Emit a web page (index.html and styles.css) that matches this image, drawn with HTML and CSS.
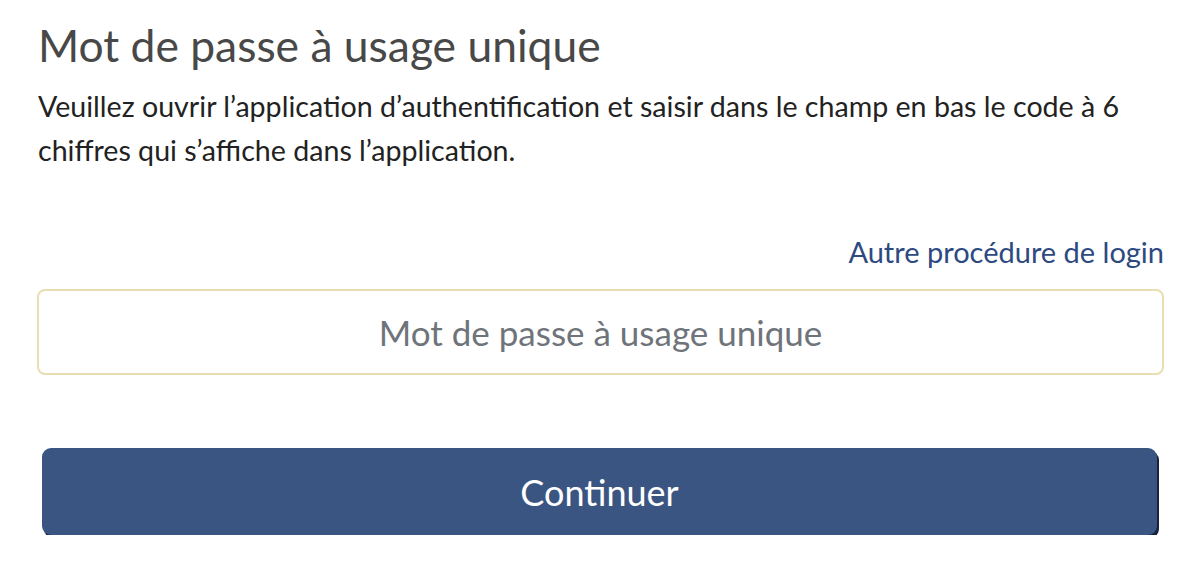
FILE: index.html
```html
<!DOCTYPE html>
<html lang="fr">
<head>
<meta charset="utf-8">
<link rel="stylesheet" href="styles.css">
</head>
<body>
<main class="page">
  <h1 class="title">Mot de passe à usage unique</h1>
  <p class="intro">Veuillez ouvrir l’application d’authentification et saisir dans le champ en bas le code à 6 chiffres qui s’affiche dans l’application.</p>
  <div class="links"><a class="alt" href="#">Autre procédure de login</a></div>
  <input class="otp" type="text" placeholder="Mot de passe à usage unique">
  <div class="actions"><button class="btn" type="button">Continuer</button></div>
</main>
</body>
</html>
```
FILE: styles.css
```css
html, body { margin: 0; padding: 0; background: #fff; }
body { font-family: Lato, "Noto Sans", sans-serif; color: #222; }
.page { padding: 19px 39px 0 37px; display: flex; flex-direction: column; }
.title { margin: 0 0 0 1px; font-weight: 400; font-size: 44.4px; line-height: 52px; color: #484848; }
.intro { margin: 13px 0 0 1px; font-size: 28.6px; line-height: 44px; color: #222; }
.links { display: flex; justify-content: flex-end; margin-top: 62px; }
.alt { font-size: 29px; line-height: 36px; color: #2d4a80; text-decoration: none; }
.otp { margin-top: 19px; box-sizing: border-box; width: 100%; height: 86px; border: 2px solid #e9ddb3; border-radius: 8px; font-family: inherit; font-size: 35px; text-align: center; padding: 0 12px; outline: none; }
.otp::placeholder { color: #6f747a; }
.actions { padding: 73px 7px 0 5px; }
.btn { display: block; box-sizing: border-box; width: 100%; height: 87px; background: #3b5583; color: #fff; border: none; border-radius: 9px; font-family: inherit; font-size: 36px; box-shadow: 2px 3px 0 #15233d; cursor: pointer; }
```
